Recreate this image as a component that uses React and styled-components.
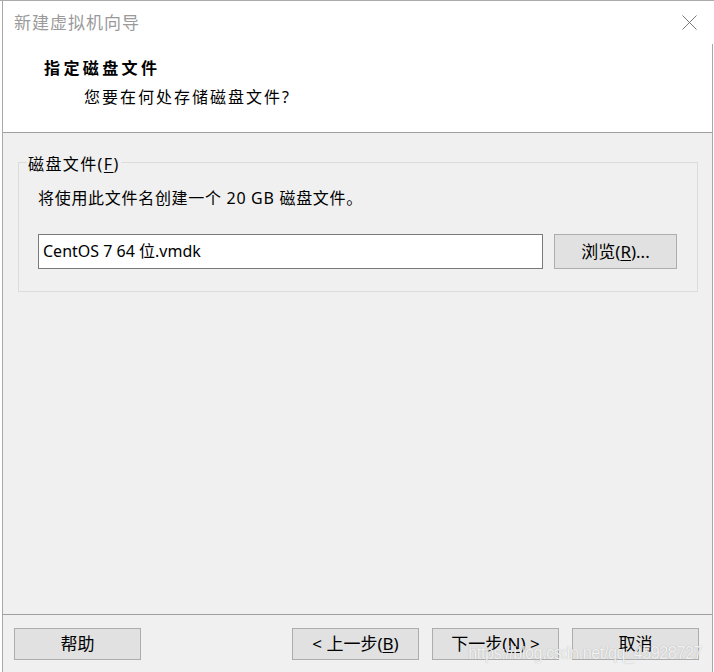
import React from "react";
import styled, { createGlobalStyle } from "styled-components";

const Global = createGlobalStyle`
  html, body { margin: 0; padding: 0; background: #ffffff; }
  body { font-family: "Noto Sans", "Noto Sans CJK SC", sans-serif; }
`;

const CJK = `"Noto Sans", "Noto Sans CJK SC", sans-serif`;

const Window = styled.div`
  position: relative;
  width: 714px;
  height: 672px;
  box-sizing: border-box;
  border-top: 1px solid #ababab;
  background: #ffffff;
  overflow: hidden;
  display: flex;
  flex-direction: column;
`;

const Frame = styled.div`
  flex: 1;
  margin-left: 2px;
  margin-right: 1px;
  border-left: 1px solid #a8a8a8;
  display: flex;
  flex-direction: column;
  min-height: 0;
`;

const TitleBar = styled.div`
  height: 43px;
  flex: none;
  display: flex;
  align-items: center;
  justify-content: space-between;
  padding-left: 11px;
  padding-right: 16px;
  background: #ffffff;
`;

const TitleText = styled.div`
  font-family: ${CJK};
  font-size: 17px;
  letter-spacing: 1px;
  color: #9a9a9a;
  line-height: 20px;
`;

const CloseIcon = styled.svg`
  width: 15px;
  height: 15px;
  display: block;
`;

const Content = styled.div`
  flex: 1;
  display: flex;
  flex-direction: column;
  border-right: 1px solid #a8a8a8;
  min-height: 0;
`;

const Header = styled.div`
  height: 89px;
  flex: none;
  box-sizing: border-box;
  background: #ffffff;
  border-bottom: 1px solid #a0a0a0;
  padding: 14px 0 0 41px;
`;

const HeaderTitle = styled.div`
  font-family: ${CJK};
  font-weight: 700;
  font-size: 16px;
  letter-spacing: 3.4px;
  line-height: 20px;
  color: #000;
`;

const HeaderSub = styled.div`
  margin-top: 9px;
  padding-left: 40px;
  font-family: ${CJK};
  font-size: 16px;
  letter-spacing: 2px;
  line-height: 20px;
  color: #000;
`;

const Body = styled.div`
  flex: 1;
  background: #f0f0f0;
  padding: 17px 14px 0 15px;
`;

const Group = styled.fieldset`
  margin: 0;
  border: 1px solid #dcdcdc;
  padding: 14px 19px 22px 19px;
  display: flex;
  flex-direction: column;
`;

const Legend = styled.legend`
  margin-left: -11px;
  padding: 4px 1px 0 1px;
  font-family: ${CJK};
  font-size: 16px;
  letter-spacing: 1.4px;
  line-height: 20px;
  color: #000;
`;

const Info = styled.div`
  font-family: ${CJK};
  font-size: 16px;
  letter-spacing: 0.7px;
  line-height: 20px;
  color: #000;
`;

const FileRow = styled.div`
  margin-top: 26px;
  display: flex;
  gap: 11px;
`;

const FileInput = styled.div`
  width: 505px;
  height: 35px;
  box-sizing: border-box;
  border: 1px solid #7a7a7a;
  background: #ffffff;
  padding: 0 4px 3px 4px;
  display: flex;
  align-items: center;
  font-family: ${CJK};
  font-size: 16px;
  color: #000;
`;

const Button = styled.div`
  width: ${(p) => p.$w || 127}px;
  height: ${(p) => p.$h || 32}px;
  flex: none;
  box-sizing: border-box;
  border: 1px solid #adadad;
  background: #e1e1e1;
  display: flex;
  align-items: center;
  justify-content: center;
  font-family: ${CJK};
  font-size: 17px;
  color: #000;
  line-height: 20px;
  white-space: pre;
`;

const Key = styled.span`
  text-decoration: underline;
  text-underline-offset: 2px;
`;

const Footer = styled.div`
  height: 58px;
  flex: none;
  background: #f0f0f0;
  border-top: 1px solid #a0a0a0;
  padding: 13px 13px 0 11px;
  box-sizing: border-box;
  display: flex;
  align-items: flex-start;
`;

const Spacer = styled.div`
  flex: 1;
`;

const NavGroup = styled.div`
  display: flex;
  gap: 13px;
`;

const Watermark = styled.div`
  position: absolute;
  right: 12px;
  bottom: 8px;
  font-family: "Liberation Sans", sans-serif;
  font-size: 19px;
  letter-spacing: -0.5px;
  color: rgba(255, 255, 255, 0.85);
  text-shadow: 0 0 1px rgba(120, 120, 120, 0.6);
  transform: scaleX(0.85);
  transform-origin: right center;
  pointer-events: none;
`;

export default function App() {
  return (
    <>
      <Global />
      <Window>
        <Frame>
          <TitleBar>
            <TitleText>新建虚拟机向导</TitleText>
            <CloseIcon viewBox="0 0 15 15">
              <path d="M0.5 0.5 L14.5 14.5 M14.5 0.5 L0.5 14.5" stroke="#7a7a7a" strokeWidth="1" fill="none" />
            </CloseIcon>
          </TitleBar>
          <Content>
            <Header>
              <HeaderTitle>指定磁盘文件</HeaderTitle>
              <HeaderSub>您要在何处存储磁盘文件?</HeaderSub>
            </Header>
            <Body>
              <Group>
                <Legend>
                  磁盘文件(<Key>F</Key>)
                </Legend>
                <Info>将使用此文件名创建一个 20 GB 磁盘文件。</Info>
                <FileRow>
                  <FileInput>CentOS 7 64 位.vmdk</FileInput>
                  <Button $w={123} $h={35}>
                    浏览(<Key>R</Key>)...
                  </Button>
                </FileRow>
              </Group>
            </Body>
            <Footer>
              <Button>帮助</Button>
              <Spacer />
              <NavGroup>
                <Button>
                  {"< 上一步("}<Key>B</Key>)
                </Button>
                <Button>
                  下一步(<Key>N</Key>){" >"}
                </Button>
                <Button>取消</Button>
              </NavGroup>
            </Footer>
          </Content>
        </Frame>
        <Watermark>https://blog.csdn.net/qq_45928727</Watermark>
      </Window>
    </>
  );
}
